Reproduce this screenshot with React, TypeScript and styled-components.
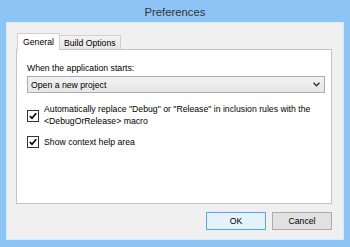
import React from "react";
import styled, { createGlobalStyle } from "styled-components";

const GlobalStyle = createGlobalStyle`
    body {
        margin: 0;
        font-family: "Liberation Sans", Arial, sans-serif;
        font-size: 8.7px;
        color: #000;
    }
`;

const Window = styled.div`
    width: 350px;
    height: 247px;
    box-sizing: border-box;
    background: #8cc4f6;
    padding: 0 6px 7px 6px;
    display: flex;
    flex-direction: column;
`;

const TitleBar = styled.div`
    height: 24px;
    display: flex;
    align-items: center;
    justify-content: center;
    font-size: 11.3px;
    color: #333;
    padding-top: 2px;
    box-sizing: border-box;
`;

const Client = styled.div`
    flex: 1;
    background: #f0f0f0;
    border: 1px solid #d6eafb;
    padding: 10px 11px 9px 9px;
    display: flex;
    flex-direction: column;
`;

const TabStrip = styled.div`
    display: flex;
    align-items: flex-end;
    height: 17px;
    margin-bottom: -1px;
    padding-left: 1px;
    position: relative;
    z-index: 1;
`;

const Tab = styled.div<{ active?: boolean }>`
    box-sizing: border-box;
    height: ${({ active }) => (active ? "17px" : "15px")};
    padding: ${({ active }) => (active ? "0 5px" : "0 4px")};
    display: flex;
    align-items: center;
    border: 1px solid #d0d0d0;
    border-bottom: ${({ active }) => (active ? "none" : "1px solid #c4c4c4")};
    border-left: ${({ active }) => (active ? "1px solid #d0d0d0" : "none")};
    background: ${({ active }) => (active ? "#fff" : "linear-gradient(#f3f3f3, #e6e6e6)")};
`;

const Panel = styled.div`
    height: 155px;
    box-sizing: border-box;
    background: #fff;
    border: 1px solid #c4c4c4;
    padding: 12px 6px 0 10px;
    display: flex;
    flex-direction: column;
`;

const Label = styled.div`
    line-height: 13px;
`;

const Select = styled.div`
    margin-top: 1px;
    height: 17px;
    box-sizing: border-box;
    border: 1px solid #acacac;
    background: linear-gradient(#f2f2f2, #e6e6e6);
    display: flex;
    align-items: center;
    justify-content: space-between;
    padding: 0 4px 0 3px;
`;

const CheckRow = styled.label<{ gap: number }>`
    margin-top: ${({ gap }) => gap}px;
    display: flex;
    align-items: flex-start;
    gap: 5px;
    line-height: 12px;
`;

const Box = styled.span<{ offset: number }>`
    flex: none;
    width: 12px;
    height: 12px;
    box-sizing: border-box;
    border: 1px solid #333;
    background: #fff;
    margin-top: ${({ offset }) => offset}px;
    display: flex;
    align-items: center;
    justify-content: center;
`;

const Footer = styled.div`
    margin-top: 8px;
    display: flex;
    justify-content: flex-end;
    gap: 6px;
`;

const Button = styled.div<{ primary?: boolean }>`
    width: 60px;
    height: 18px;
    box-sizing: border-box;
    border: 1px solid ${({ primary }) => (primary ? "#55a6ee" : "#adadad")};
    background: ${({ primary }) => (primary ? "#e5f1fb" : "#e1e1e1")};
    display: flex;
    align-items: center;
    justify-content: center;
`;

const Check = () => (
    <svg width="8" height="8" viewBox="0 0 8 8">
        <path d="M0.8 4 L3 6.3 L7.2 1.2" fill="none" stroke="#000" strokeWidth="1.7" />
    </svg>
);

const Chevron = () => (
    <svg width="7" height="5" viewBox="0 0 7 5">
        <path d="M0.5 0.8 L3.5 3.8 L6.5 0.8" fill="none" stroke="#333" strokeWidth="1.5" />
    </svg>
);

export default function App() {
    return (
        <>
            <GlobalStyle />
            <Window>
                <TitleBar>Preferences</TitleBar>
                <Client>
                    <TabStrip>
                        <Tab active>General</Tab>
                        <Tab>Build Options</Tab>
                    </TabStrip>
                    <Panel>
                        <Label>When the application starts:</Label>
                        <Select>
                            <span>Open a new project</span>
                            <Chevron />
                        </Select>
                        <CheckRow gap={10}>
                            <Box offset={7}>
                                <Check />
                            </Box>
                            <span>
                                Automatically replace "Debug" or "Release" in inclusion rules with the
                                <br />
                                &lt;DebugOrRelease&gt; macro
                            </span>
                        </CheckRow>
                        <CheckRow gap={9}>
                            <Box offset={0}>
                                <Check />
                            </Box>
                            <span>Show context help area</span>
                        </CheckRow>
                    </Panel>
                    <Footer>
                        <Button primary>OK</Button>
                        <Button>Cancel</Button>
                    </Footer>
                </Client>
            </Window>
        </>
    );
}
